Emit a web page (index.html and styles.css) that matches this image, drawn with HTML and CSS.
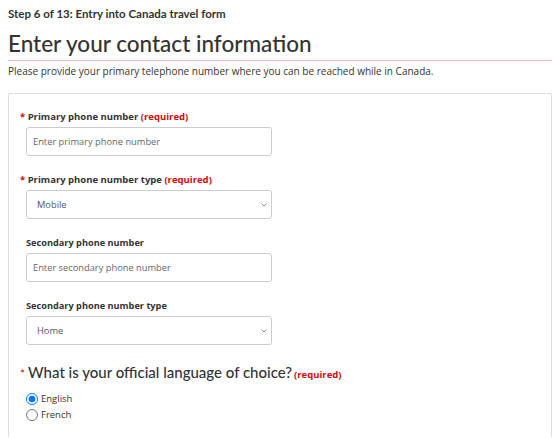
FILE: index.html
```html
<!DOCTYPE html>
<html lang="en">
<head>
<meta charset="utf-8">
<link rel="stylesheet" href="styles.css">
</head>
<body>
<div class="page">
  <p class="step">Step 6 of 13: Entry into Canada travel form</p>
  <h1 class="title">Enter your contact information</h1>
  <p class="intro">Please provide your primary telephone number where you can be reached while in Canada.</p>
  <div class="card">
    <div class="field">
      <label class="label"><span class="star">*</span> Primary phone number <span class="req">(required)</span></label>
      <input class="control" type="text" placeholder="Enter primary phone number">
    </div>
    <div class="field">
      <label class="label"><span class="star">*</span> Primary phone number type <span class="req">(required)</span></label>
      <div class="select"><span>Mobile</span><svg class="chev" width="6" height="4" viewBox="0 0 6 4"><path d="M0.8 0.8 L3 3 L5.2 0.8" fill="none" stroke="#888" stroke-width="1"/></svg></div>
    </div>
    <div class="field">
      <label class="label plain">Secondary phone number</label>
      <input class="control" type="text" placeholder="Enter secondary phone number">
    </div>
    <div class="field">
      <label class="label plain">Secondary phone number type</label>
      <div class="select"><span>Home</span><svg class="chev" width="6" height="4" viewBox="0 0 6 4"><path d="M0.8 0.8 L3 3 L5.2 0.8" fill="none" stroke="#888" stroke-width="1"/></svg></div>
    </div>
    <fieldset class="lang">
      <legend class="question"><span class="star">*</span><span class="qtext">What is your official language of choice?</span><span class="req">(required)</span></legend>
      <label class="radio"><span class="dot checked"></span>English</label>
      <label class="radio"><span class="dot"></span>French</label>
    </fieldset>
  </div>
</div>
</body>
</html>
```
FILE: styles.css
```css
html, body {
  margin: 0;
  padding: 0;
  background: #fff;
  overflow: hidden;
}
body {
  font-family: "Open Sans", "Noto Sans", sans-serif;
  color: #333;
}
.page {
  width: 544px;
  padding: 0 0 0 8px;
}
.step {
  margin: 0;
  padding-top: 7px;
  font-family: Lato, sans-serif;
  font-weight: 700;
  font-size: 11.5px;
  line-height: 14px;
  color: #333;
}
.title {
  margin: 10px 0 0;
  font-family: Lato, sans-serif;
  font-weight: 500;
  font-size: 22.5px;
  line-height: 26px;
  color: #333;
  padding-bottom: 3px;
  border-bottom: 1px solid #e8b8bc;
}
.intro {
  margin: 3px 0 0;
  font-size: 10px;
  line-height: 14px;
  color: #333;
}
.card {
  margin-top: 15px;
  border: 1px solid #ddd;
  border-bottom: 0;
  border-radius: 3px 3px 0 0;
  padding: 16px 0 0 11px;
  height: 344px;
  box-sizing: border-box;
}
.field {
  margin-bottom: 17px;
}
.label {
  display: block;
  font-weight: 700;
  font-size: 9.5px;
  line-height: 14px;
  color: #333;
  margin-bottom: 3px;
}
.label.plain {
  padding-left: 6px;
  font-size: 9.2px;
}
.star {
  color: #d3080c;
}
.req {
  color: #d3080c;
  font-weight: 700;
}
.control, .select {
  display: flex;
  align-items: center;
  box-sizing: border-box;
  width: 246px;
  height: 29px;
  margin-left: 6px;
  border: 1px solid #ccc;
  border-radius: 3px;
  padding: 0 4px 0 6px;
  font-family: "Open Sans", sans-serif;
  font-size: 9.3px;
  color: #555;
  background: #fff;
  outline: none;
}
.control::placeholder {
  color: #666;
}
.select {
  justify-content: space-between;
  padding-left: 10px;
}
.select span {
  color: #555;
}
.lang {
  border: 0;
  margin: 0;
  padding: 0;
  padding-top: 2px;
}
.question {
  padding: 0;
  display: flex;
  align-items: baseline;
  font-family: Lato, sans-serif;
  line-height: 20px;
  margin-bottom: 4px;
}
.question .star {
  font-size: 12px;
  margin-right: 3px;
}
.question .qtext {
  font-size: 15px;
  font-weight: 500;
  color: #333;
  margin-right: 2px;
}
.question .req {
  font-family: "Open Sans", sans-serif;
  font-size: 9.5px;
}
.radio {
  display: flex;
  align-items: center;
  font-size: 9.5px;
  line-height: 16px;
  color: #333;
  padding-left: 6px;
}
.dot {
  width: 10px;
  height: 10px;
  border: 1px solid #767676;
  border-radius: 50%;
  margin-right: 3px;
  box-sizing: content-box;
}
.dot.checked {
  border-color: #0075ff;
  background: radial-gradient(circle, #0075ff 0 3.2px, #fff 3.7px);
}
```
